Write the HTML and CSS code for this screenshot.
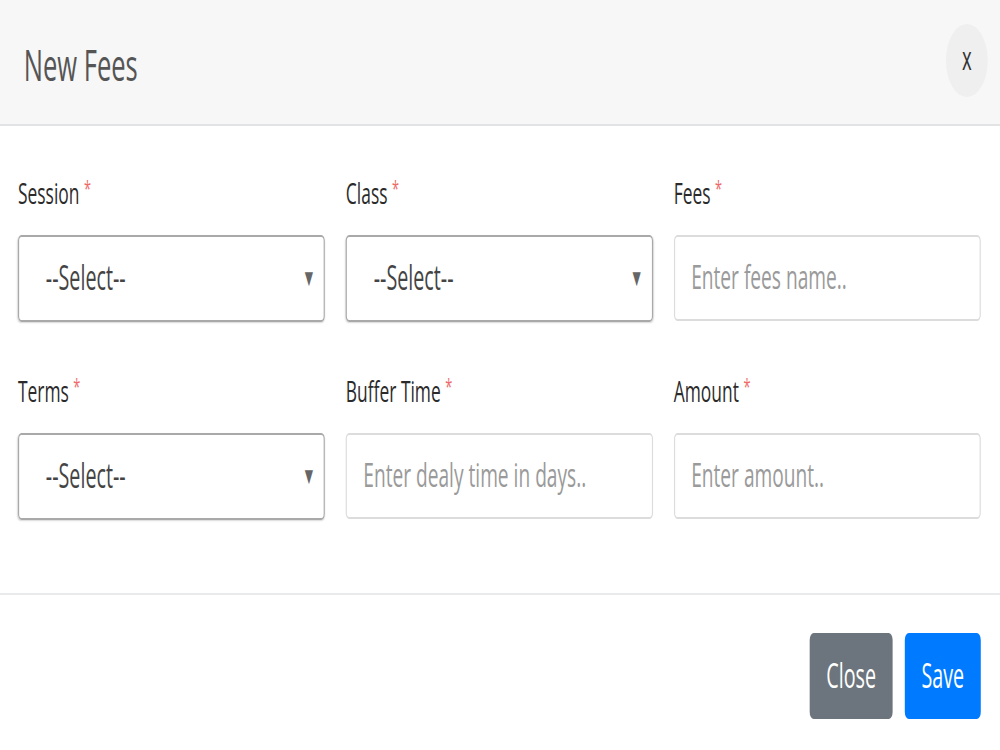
FILE: index.html
```html
<html>
<head>
    <title>New Fees</title>
    <link rel="stylesheet" href="styles.css">
</head>
<body>
    <div class="frame">
    <div class="modal">
        <div class="modal-header">
            <h4 class="modal-title">New Fees</h4>
            <div class="close-btn">x</div>
        </div>

        <div class="modal-body">
            <div class="field">
                <label>Session <span class="req">*</span></label>
                <div class="select-box">--Select--<span class="arrow">&#9660;</span></div>
            </div>
            <div class="field">
                <label>Class <span class="req">*</span></label>
                <div class="select-box">--Select--<span class="arrow">&#9660;</span></div>
            </div>
            <div class="field">
                <label>Fees <span class="req">*</span></label>
                <input class="text-box" type="text" placeholder="Enter fees name..">
            </div>
            <div class="field">
                <label>Terms <span class="req">*</span></label>
                <div class="select-box">--Select--<span class="arrow">&#9660;</span></div>
            </div>
            <div class="field">
                <label>Buffer Time <span class="req">*</span></label>
                <input class="text-box" type="text" placeholder="Enter dealy time in days..">
            </div>
            <div class="field">
                <label>Amount <span class="req">*</span></label>
                <input class="text-box" type="text" placeholder="Enter amount..">
            </div>
        </div>

        <div class="modal-footer">
            <div class="button grey">Close</div>
            <div class="button blue">Save</div>
        </div>
    </div>
    </div>
</body>
</html>
```

FILE: styles.css
```css
body {
    margin: 0;
    background-color: white;
    overflow: hidden;
    font-family: 'Open Sans', 'Noto Sans', sans-serif;
}

.frame {
    width: 1000px;
    height: 750px;
    overflow: hidden;
}

/* the whole dialog is drawn wide and squeezed to the window */
.modal {
    width: 1724px;
    height: 750px;
    transform: scaleX(0.58);
    transform-origin: left top;
    display: flex;
    flex-direction: column;
}

.modal-header {
    height: 124px;
    background-color: #f7f7f7;
    border-bottom: 2px solid #e2e3e5;
    display: flex;
    align-items: center;
    justify-content: space-between;
    padding: 0 21px 0 41px;
}

.modal-title {
    margin: 0;
    font-size: 44px;
    font-weight: 400;
    color: #555;
    padding-top: 4px;
}

.close-btn {
    width: 72px;
    height: 73px;
    border-radius: 50%;
    background-color: #efefef;
    color: #333;
    font-size: 32px;
    display: flex;
    align-items: center;
    justify-content: center;
    padding-bottom: 6px;
    box-sizing: border-box;
    margin-top: -4px;
}

.modal-body {
    display: grid;
    grid-template-columns: repeat(3, 1fr);
    column-gap: 36px;
    row-gap: 49px;
    padding: 47px 33px 73px 31px;
    border-bottom: 2px solid #e9eaec;
}

.field label {
    display: block;
    height: 40px;
    line-height: 40px;
    font-size: 30px;
    color: #2b2b2b;
    margin-bottom: 22px;
}

.req {
    color: #ee6b6b;
    font-size: 22px;
    vertical-align: top;
    position: relative;
    top: -6px;
}

.select-box {
    position: relative;
    height: 87px;
    box-sizing: border-box;
    border: 2px solid #a9a9a9;
    border-radius: 6px;
    padding-left: 46px;
    line-height: 80px;
    font-size: 34px;
    color: #444;
    box-shadow: 0 1px 2px rgba(0, 0, 0, .15);
}

.arrow {
    position: absolute;
    right: 14px;
    top: 0;
    font-size: 24px;
    color: #666;
}

.text-box {
    display: block;
    width: 100%;
    height: 86px;
    box-sizing: border-box;
    border: 2px solid #dcdcdc;
    border-radius: 6px;
    padding: 0 0 4px 28px;
    font-family: 'Open Sans', 'Noto Sans', sans-serif;
    font-size: 33px;
    color: #444;
    outline: none;
}

.text-box::placeholder {
    color: #9a9a9a;
}

.modal-footer {
    display: flex;
    justify-content: flex-end;
    gap: 21px;
    padding: 38px 33px 0 0;
}

.button {
    height: 86px;
    line-height: 84px;
    font-size: 34px;
    color: white;
    border-radius: 7px;
    text-align: center;
    box-sizing: border-box;
}

.grey {
    width: 143px;
    background-color: #6c757d;
}

.blue {
    width: 131px;
    background-color: #007bff;
}
```
